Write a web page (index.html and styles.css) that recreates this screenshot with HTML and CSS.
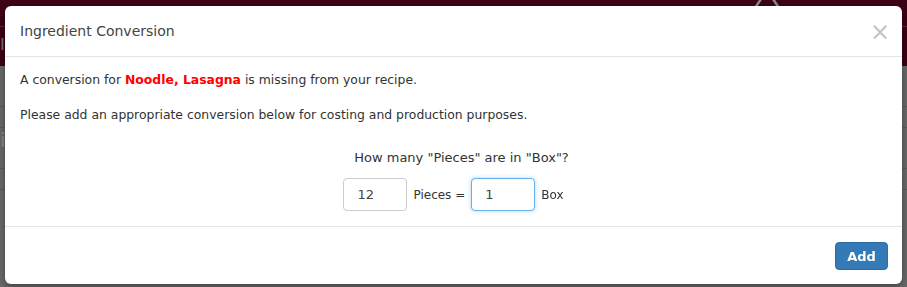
FILE: index.html
```html
<!DOCTYPE html>
<html lang="en">
<head>
    <meta charset="UTF-8">
    <title>Ingredient Conversion</title>
    <link rel="stylesheet" href="styles.css">
</head>
<body>

    <div class="navbar">
        <div class="navbar-top"></div>
        <div class="navbar-sub">I</div>
    </div>
    <div class="page">
        <div class="row row-a"></div>
        <div class="row row-b"></div>
        <div class="row row-c">i</div>
        <div class="row row-d"></div>
    </div>

    <svg class="warn-icon" width="30" height="10" viewBox="0 0 30 10">
        <path d="M11 -4 L3 8 L27 8 L19 -4" fill="none" stroke="#8a8a8a" stroke-width="2.5"/>
    </svg>

    <div class="modal">
        <div class="modal-header">
            <span class="modal-title">Ingredient Conversion</span>
            <span class="close">&times;</span>
        </div>
        <div class="modal-body">
            <p>A conversion for <strong class="ingredient">Noodle, Lasagna</strong> is missing from your recipe.</p>
            <p>Please add an appropriate conversion below for costing and production purposes.</p>
            <div class="question">How many "Pieces" are in "Box"?</div>
            <div class="conversion">
                <input type="text" class="qty" value="12">
                <span>Pieces =</span>
                <input type="text" class="qty focused" value="1" autofocus>
                <span>Box</span>
            </div>
        </div>
        <div class="modal-footer">
            <button class="btn-add">Add</button>
        </div>
    </div>

</body>
</html>
```

FILE: styles.css
```css
body {
    margin: 0;
    font-family: "DejaVu Sans", Verdana, sans-serif;
    font-size: 12px;
    color: #333;
    background-color: #6b6b6b;
    height: 287px;
    overflow: hidden;
}
.navbar {
    background-color: #3e0216;
    height: 66px;
}
.navbar-top {
    height: 26px;
    border-bottom: 1px solid #5a2a36;
}
.navbar-sub {
    color: #777;
    font-size: 16px;
    padding: 8px 0 0 0;
}
.row {
    border-bottom: 1px solid #5c5c5c;
}
.row-a { height: 40px; }
.row-b { height: 20px; }
.row-c { height: 40px; color: #8c8c8c; font-size: 20px; }
.row-d { height: 20px; }
.warn-icon {
    position: absolute;
    left: 752px;
    top: 0;
}
.modal {
    position: absolute;
    left: 5px;
    top: 6px;
    width: 897px;
    height: 278px;
    background-color: #fff;
    border-radius: 6px;
    box-shadow: 0 3px 9px rgba(0, 0, 0, 0.4);
    display: flex;
    flex-direction: column;
}
.modal-header {
    display: flex;
    justify-content: space-between;
    align-items: center;
    height: 50px;
    padding: 0 15px;
    border-bottom: 1px solid #e5e5e5;
}
.modal-title {
    font-size: 14px;
    color: #444;
}
.close {
    font-size: 24px;
    color: #c4c4c4;
    margin-right: -3px;
    margin-top: 2px;
}
.modal-body {
    padding: 16px 15px 0;
    height: 153px;
    border-bottom: 1px solid #e5e5e5;
}
.modal-body p {
    margin: 0 0 21px;
    line-height: 14px;
    font-size: 12.4px;
}
.ingredient {
    color: #f00;
}
.question {
    text-align: center;
    font-size: 13px;
    margin-top: 28px;
    padding-left: 16px;
}
.conversion {
    display: flex;
    justify-content: center;
    align-items: center;
    gap: 6px;
    margin-top: 13px;
}
.qty {
    width: 64px;
    height: 33px;
    box-sizing: border-box;
    border: 1px solid #ccc;
    border-radius: 4px;
    padding: 0 13px;
    font-family: inherit;
    font-size: 13px;
    color: #444;
    outline: none;
}
.focused {
    border-color: #66afe9;
    box-shadow: 0 0 4px rgba(102, 175, 233, 0.5);
}
.modal-footer {
    flex: 1;
    display: flex;
    justify-content: flex-end;
    align-items: center;
    padding: 0 14px;
}
.btn-add {
    background-color: #337ab7;
    border: 1px solid #2e6da4;
    border-radius: 4px;
    color: #fff;
    font-family: inherit;
    font-size: 13px;
    font-weight: bold;
    width: 53px;
    height: 28px;
    margin-top: 1px;
}
```
